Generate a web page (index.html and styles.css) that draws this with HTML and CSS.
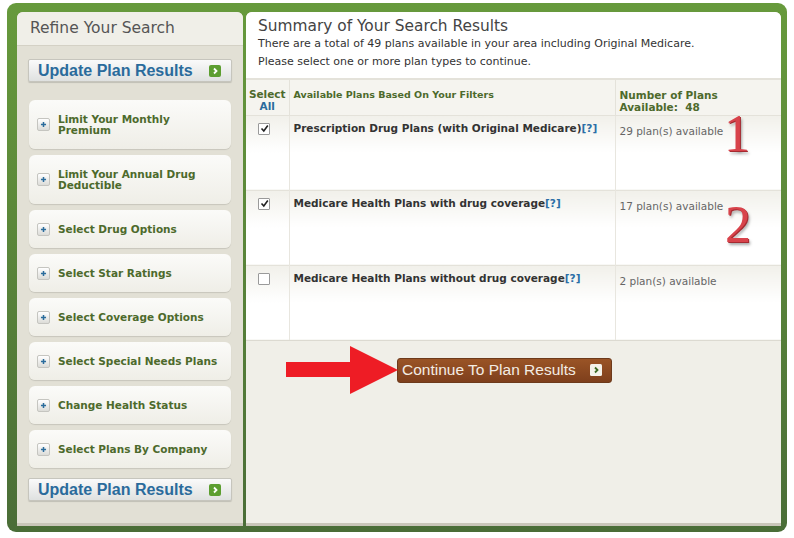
FILE: index.html
```html
<!DOCTYPE html>
<html lang="en">
<head>
    <meta charset="UTF-8">
    <meta name="viewport" content="width=device-width, initial-scale=1.0">
    <title>Summary of Your Search Results</title>
    <link rel="stylesheet" href="styles.css">
</head>
<body>
    <div class="frame">
        <div class="sidebar">
            <div class="sidebar-head">Refine Your Search</div>
            <div class="sidebar-body">
                <button class="update-btn">Update Plan Results <span class="go-icon"><svg width="12" height="12" viewBox="0 0 12 12"><rect width="12" height="12" rx="2" fill="#5c9e30"/><path d="M5 3.5 L7.5 6 L5 8.5" fill="none" stroke="#fff" stroke-width="1.8"/></svg></span></button>

                <div class="filters">
                    <div class="filter tall"><span class="plus"><svg width="13" height="13" viewBox="0 0 13 13"><path d="M6.5 3.5 V9.5 M3.5 6.5 H9.5" stroke="#2b6c9c" stroke-width="1.8"/></svg></span><span class="filter-label">Limit Your Monthly<br>Premium</span></div>
                    <div class="filter tall"><span class="plus"><svg width="13" height="13" viewBox="0 0 13 13"><path d="M6.5 3.5 V9.5 M3.5 6.5 H9.5" stroke="#2b6c9c" stroke-width="1.8"/></svg></span><span class="filter-label">Limit Your Annual Drug<br>Deductible</span></div>
                    <div class="filter"><span class="plus"><svg width="13" height="13" viewBox="0 0 13 13"><path d="M6.5 3.5 V9.5 M3.5 6.5 H9.5" stroke="#2b6c9c" stroke-width="1.8"/></svg></span><span class="filter-label">Select Drug Options</span></div>
                    <div class="filter"><span class="plus"><svg width="13" height="13" viewBox="0 0 13 13"><path d="M6.5 3.5 V9.5 M3.5 6.5 H9.5" stroke="#2b6c9c" stroke-width="1.8"/></svg></span><span class="filter-label">Select Star Ratings</span></div>
                    <div class="filter"><span class="plus"><svg width="13" height="13" viewBox="0 0 13 13"><path d="M6.5 3.5 V9.5 M3.5 6.5 H9.5" stroke="#2b6c9c" stroke-width="1.8"/></svg></span><span class="filter-label">Select Coverage Options</span></div>
                    <div class="filter"><span class="plus"><svg width="13" height="13" viewBox="0 0 13 13"><path d="M6.5 3.5 V9.5 M3.5 6.5 H9.5" stroke="#2b6c9c" stroke-width="1.8"/></svg></span><span class="filter-label">Select Special Needs Plans</span></div>
                    <div class="filter"><span class="plus"><svg width="13" height="13" viewBox="0 0 13 13"><path d="M6.5 3.5 V9.5 M3.5 6.5 H9.5" stroke="#2b6c9c" stroke-width="1.8"/></svg></span><span class="filter-label">Change Health Status</span></div>
                    <div class="filter"><span class="plus"><svg width="13" height="13" viewBox="0 0 13 13"><path d="M6.5 3.5 V9.5 M3.5 6.5 H9.5" stroke="#2b6c9c" stroke-width="1.8"/></svg></span><span class="filter-label">Select Plans By Company</span></div>
                </div>

                <button class="update-btn">Update Plan Results <span class="go-icon"><svg width="12" height="12" viewBox="0 0 12 12"><rect width="12" height="12" rx="2" fill="#5c9e30"/><path d="M5 3.5 L7.5 6 L5 8.5" fill="none" stroke="#fff" stroke-width="1.8"/></svg></span></button>
            </div>
        </div>

        <div class="results">
            <div class="summary">
                <h1>Summary of Your Search Results</h1>
                <p>There are a total of 49 plans available in your area including Original Medicare.</p>
                <p>Please select one or more plan types to continue.</p>
            </div>

            <table class="plans">
                <colgroup>
                    <col class="w-select">
                    <col class="w-name">
                    <col>
                </colgroup>
                <thead>
                    <tr>
                        <th class="col-select">Select<br><span class="blue">All</span></th>
                        <th class="col-name">Available Plans Based On Your Filters</th>
                        <th class="col-count">Number of Plans<br>Available:&nbsp; 48</th>
                    </tr>
                </thead>
                <tbody>
                    <tr>
                        <td class="col-select"><span class="check on"><svg width="9" height="9" viewBox="0 0 9 9"><path d="M1.5 4.5 L3.8 7 L7.8 1.5" fill="none" stroke="#222" stroke-width="1.6"/></svg></span></td>
                        <td class="col-name">Prescription Drug Plans (with Original Medicare)<span class="help">[?]</span></td>
                        <td class="col-count">29 plan(s) available</td>
                    </tr>
                    <tr>
                        <td class="col-select"><span class="check on"><svg width="9" height="9" viewBox="0 0 9 9"><path d="M1.5 4.5 L3.8 7 L7.8 1.5" fill="none" stroke="#222" stroke-width="1.6"/></svg></span></td>
                        <td class="col-name">Medicare Health Plans with drug coverage<span class="help">[?]</span></td>
                        <td class="col-count">17 plan(s) available</td>
                    </tr>
                    <tr>
                        <td class="col-select"><span class="check"></span></td>
                        <td class="col-name">Medicare Health Plans without drug coverage<span class="help">[?]</span></td>
                        <td class="col-count">2 plan(s) available</td>
                    </tr>
                </tbody>
            </table>

            <div class="actions">
                <svg class="red-arrow" width="112" height="48" viewBox="0 0 112 48"><rect x="0" y="16" width="66" height="15" fill="#ee1c25"/><polygon points="64,0 112,24 64,48" fill="#ee1c25"/></svg>
                <button class="continue-btn">Continue To Plan Results <span class="go-icon"><svg width="12" height="12" viewBox="0 0 12 12"><rect width="12" height="12" rx="1.5" fill="#f4f2ea"/><path d="M5 3.5 L7.5 6 L5 8.5" fill="none" stroke="#3d6a22" stroke-width="1.8"/></svg></span></button>
            </div>

            <span class="marker marker-1">1</span>
            <span class="marker marker-2">2</span>
        </div>
    </div>
</body>
</html>
```

FILE: styles.css
```css
body {
    margin: 0;
    background-color: #ffffff;
    font-family: "DejaVu Sans", Verdana, sans-serif;
}
.frame {
    display: flex;
    gap: 3px;
    width: 764px;
    height: 511px;
    margin: 3px 0 0 7px;
    padding: 9px 6px 9px 10px;
    border-radius: 9px;
    background: linear-gradient(#679a3c, #4a6d37);
}
.sidebar {
    width: 226px;
    display: flex;
    flex-direction: column;
    background-color: #e2e0d5;
    border-radius: 6px 6px 0 0;
    box-shadow: 0 3px 0 #c9c6b9;
}
.sidebar-head {
    height: 33px;
    line-height: 32px;
    padding-left: 13px;
    font-size: 15.5px;
    color: #555555;
    background-color: #f0efe8;
    border-bottom: 1px solid #d4d1c5;
    border-radius: 6px 6px 0 0;
}
.sidebar-body {
    padding: 13px 11px 0 11px;
}
.update-btn {
    display: flex;
    align-items: center;
    justify-content: space-between;
    width: 204px;
    height: 23px;
    padding: 0 10px 0 9px;
    border: 1px solid #c6c5bd;
    border-radius: 2px;
    background: linear-gradient(#fafafa, #dfe1e0);
    box-shadow: 0 1px 1px rgba(0, 0, 0, 0.15);
    font-family: "Liberation Sans", Arial, sans-serif;
    font-weight: bold;
    font-size: 16px;
    color: #2a6b9c;
    cursor: pointer;
}
.go-icon {
    display: flex;
}
.filters {
    display: flex;
    flex-direction: column;
    gap: 6px;
    margin: 18px 1px 10px 1px;
}
.filter {
    display: flex;
    align-items: center;
    height: 38px;
    padding-left: 8px;
    border-radius: 6px;
    background: linear-gradient(#fbfbf9, #efeee7);
    box-shadow: 0 1px 1px rgba(0, 0, 0, 0.12);
}
.filter.tall {
    height: 49px;
}
.plus {
    display: flex;
    margin-right: 8px;
    border: 1px solid #c5c5c0;
    border-radius: 2px;
    background: linear-gradient(#ffffff, #dcdcd8);
}
.plus svg {
    width: 11px;
    height: 11px;
}
.filter-label {
    font-size: 10.5px;
    font-weight: bold;
    line-height: 11px;
    color: #4d6a2c;
}
.results {
    position: relative;
    flex: 1;
    display: flex;
    flex-direction: column;
    background-color: #f0efe8;
    border-radius: 6px 6px 0 0;
    box-shadow: 0 3px 0 #c9c6b9;
}
.summary {
    height: 68px;
    padding: 6px 12px 0 12px;
    box-sizing: border-box;
    background-color: #ffffff;
    border-bottom: 2px solid #e4e2da;
    border-radius: 6px 6px 0 0;
}
.summary h1 {
    margin: 0;
    font-size: 15.4px;
    font-weight: normal;
    line-height: 17px;
    color: #444444;
}
.summary p {
    margin: 0;
    font-size: 11px;
    line-height: 18px;
    color: #333333;
}
.plans {
    width: 100%;
    table-layout: fixed;
    border-collapse: collapse;
    background-color: #ffffff;
}
.w-select {
    width: 43px;
}
.w-name {
    width: 326px;
}
.plans thead tr {
    height: 35px;
}
.plans tbody tr {
    height: 75px;
}
.plans th {
    padding: 9px 0 0 4px;
    text-align: left;
    vertical-align: top;
    font-size: 10.5px;
    line-height: 12px;
    color: #4d6a2c;
    background-color: #f5f4ef;
    border-right: 1px solid #e4e2da;
}
.plans th.col-name {
    font-size: 9.5px;
}
.plans th.col-select {
    text-align: center;
    padding: 8px 0 0 0;
}
.plans th:last-child,
.plans td:last-child {
    border-right: none;
}
.blue {
    color: #2a6b9c;
}
.plans td {
    padding: 6px 0 0 4px;
    vertical-align: top;
    font-size: 10.5px;
    background: linear-gradient(#f1f0ea, #ffffff 50%);
    border-top: 1px solid #e4e2da;
    border-right: 1px solid #e8e6df;
}
td.col-select {
    text-align: center;
}
td.col-name {
    font-weight: bold;
    color: #333333;
}
td.col-count {
    padding-top: 9px;
    color: #666666;
}
.help {
    color: #2a6ea6;
}
.check {
    display: inline-flex;
    align-items: center;
    justify-content: center;
    width: 10px;
    height: 10px;
    margin-top: 1px;
    margin-right: 10px;
    border: 1px solid #9a9a9a;
    border-radius: 1px;
    background-color: #ffffff;
}
.actions {
    display: flex;
    align-items: center;
    border-top: 1px solid #dcdad1;
    padding: 5px 0 0 40px;
}
.red-arrow {
    margin-right: -1px;
    position: relative;
    z-index: 1;
}
.continue-btn {
    display: flex;
    align-items: center;
    gap: 14px;
    height: 25px;
    padding: 0 9px 0 4px;
    border: 1px solid #6d3a1b;
    border-radius: 3px;
    background: linear-gradient(#9a5426, #7e3f1c);
    font-family: "Liberation Sans", Arial, sans-serif;
    font-size: 15.5px;
    color: #f3ece4;
    cursor: pointer;
}
.marker {
    position: absolute;
    font-family: "Liberation Serif", "Times New Roman", serif;
    font-size: 52px;
    line-height: 1;
    color: #d8434b;
    text-shadow: 1px 1px 0 #a52a31, 2px 3px 3px rgba(0, 0, 0, 0.35);
}
.marker-1 {
    left: 478px;
    top: 96px;
}
.marker-2 {
    left: 479px;
    top: 187px;
}
```
